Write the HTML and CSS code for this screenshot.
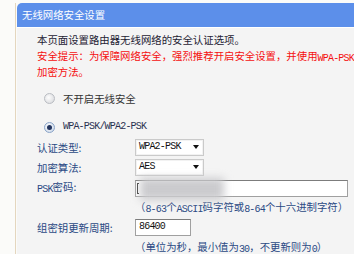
FILE: index.html
```html
<!DOCTYPE html>
<html>
<head>
<meta charset="utf-8">
<link rel="stylesheet" href="styles.css">
</head>
<body>
<div class="panel">
  <div class="head">无线网络安全设置</div>
  <div class="body">
    <p class="line intro">本页面设置路由器无线网络的安全认证选项。</p>
    <p class="line warn">安全提示：为保障网络安全，强烈推荐开启安全设置，并使用<span class="lat">WPA-PSK/WPA2-PSK AES</span></p>
    <p class="line warn">加密方法。</p>

    <div class="radio-row first">
      <span class="radio"></span>
      <span class="rtext">不开启无线安全</span>
    </div>
    <div class="radio-row second">
      <span class="radio checked"></span>
      <span class="rtext lat">WPA-PSK/WPA2-PSK</span>
    </div>

    <div class="form">
      <div class="label">认证类型:</div>
      <div class="field"><div class="select"><span class="lat">WPA2-PSK</span><span class="arrow"></span></div></div>

      <div class="label">加密算法:</div>
      <div class="field"><div class="select"><span class="lat">AES</span><span class="arrow"></span></div></div>

      <div class="label"><span class="lat">PSK</span>密码:</div>
      <div class="field"><div class="input psk"><span class="blur"></span><span class="caret"></span></div></div>

      <div class="label"></div>
      <div class="field hint">（<span class="lat">8-63</span>个<span class="lat">ASCII</span>码字符或<span class="lat">8-64</span>个十六进制字符）</div>

      <div class="label">组密钥更新周期:</div>
      <div class="field"><div class="input period"><span class="lat">86400</span></div></div>

      <div class="label"></div>
      <div class="field hint">（单位为秒，最小值为<span class="lat">30</span>，不更新则为<span class="lat">0</span>）</div>
    </div>
  </div>
</div>
</body>
</html>
```

FILE: styles.css
```css
html, body {
  margin: 0;
  padding: 0;
  overflow: hidden;
  background: #fbfbf9;
}
body {
  width: 354px;
  height: 254px;
  font-family: "Noto Sans CJK SC", "Noto Sans", sans-serif;
  font-size: 10.4px;
}
.lat {
  font-family: "Liberation Mono", monospace;
  font-size: 10px;
  letter-spacing: -0.8px;
  vertical-align: -1px;
  line-height: 1;
}
.panel {
  margin: 3px 0 0 15px;
  width: 339px;
  overflow: hidden;
  border-left: 1px solid #e4d6be;
  padding-left: 1px;
  background: #fbfbf9;
}
.head {
  height: 24px;
  line-height: 24px;
  background: #5c8fea;
  color: #fff;
  padding-left: 5px;
  border-radius: 5px 0 0 0;
  border-bottom: 1px solid #fff;
  white-space: nowrap;
}
.body {
  background: #f4f4f4;
  padding: 4px 0 0 20px;
  height: 222px;
}
.line {
  margin: 0;
  line-height: 16px;
  white-space: nowrap;
}
.intro { color: #1e2233; }
.warn { color: #f50f0f; }
.radio-row {
  display: flex;
  align-items: center;
  height: 20px;
  color: #333;
}
.radio-row.first { margin-top: 8px; }
.radio-row.second { margin-top: 9px; }
.radio-row .lat { color: #2a3150; vertical-align: 0; }
.radio {
  box-sizing: border-box;
  width: 11px;
  height: 11px;
  margin-left: 7px;
  margin-right: 8px;
  border-radius: 50%;
  border: 1px solid #b9bcc2;
  background: radial-gradient(circle at 40% 40%, #fdfdfd 0%, #dcdde0 80%);
  display: flex;
  align-items: center;
  justify-content: center;
}
.radio.checked {
  border-color: #8aa4c8;
  background: radial-gradient(circle at 40% 40%, #ffffff 0%, #cfdaea 80%);
}
.radio.checked::after {
  content: "";
  width: 5px;
  height: 5px;
  border-radius: 50%;
  background: #23355e;
}
.form {
  display: grid;
  grid-template-columns: 98px auto;
  grid-auto-rows: 20px;
  align-items: center;
}
.label {
  color: #2b4a84;
  white-space: nowrap;
}
.field { display: flex; align-items: center; }
.hint {
  color: #2b4a84;
  white-space: nowrap;
  display: block;
}
.select {
  box-sizing: border-box;
  width: 69px;
  height: 17px;
  border: 1px solid #cacaca;
  box-shadow: inset 0 0 0 1px #f2f2f2;
  background: #fff;
  display: flex;
  align-items: center;
  padding-left: 3px;
  color: #111;
}
.select .lat, .input .lat { vertical-align: 0; }
.arrow {
  margin-left: auto;
  margin-right: 4px;
  width: 0;
  height: 0;
  border-left: 3.5px solid transparent;
  border-right: 3.5px solid transparent;
  border-top: 4px solid #111;
}
.input {
  box-sizing: border-box;
  height: 17px;
  border: 1px solid #a0a0a0;
  border-top-color: #7c7c7c;
  background: #fff;
  display: flex;
  align-items: center;
  padding-left: 3px;
  color: #111;
  position: relative;
}
.input.psk { width: 213px; margin-top: 2px; }
.input.period { width: 56px; }
.blur {
  position: absolute;
  left: 4px;
  top: -3px;
  width: 84px;
  height: 22px;
  background: #cbcbce;
  filter: blur(4px);
}
.caret {
  position: absolute;
  left: 1px;
  top: 2px;
  width: 2px;
  height: 11px;
  border-left: 1px solid #555;
  border-top: 1px solid #555;
  border-bottom: 1px solid #555;
  box-sizing: border-box;
}
```
